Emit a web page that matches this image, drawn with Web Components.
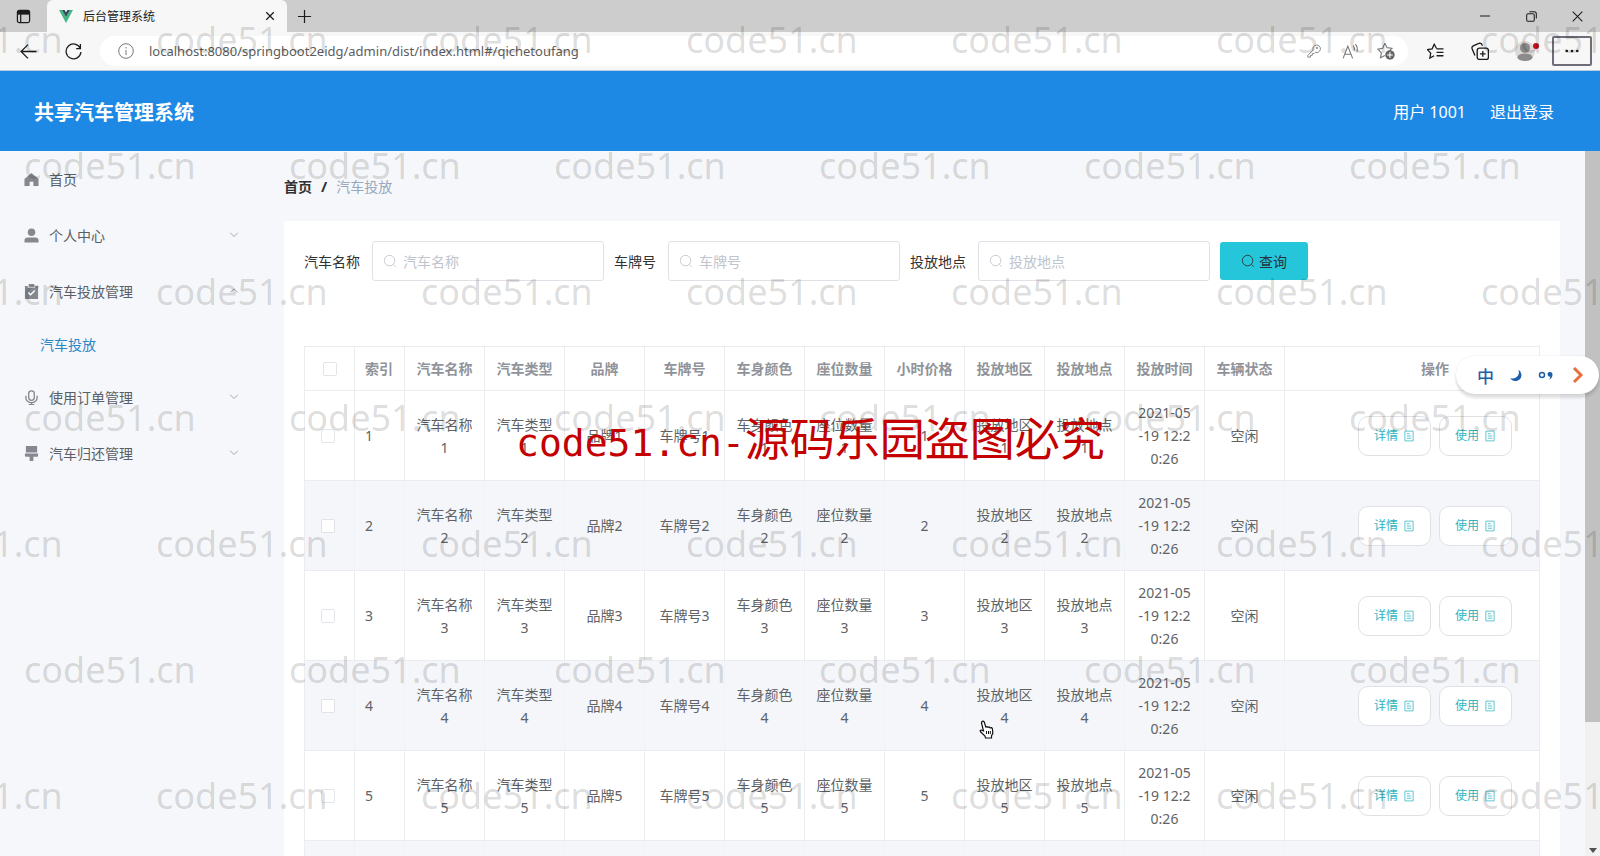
<!DOCTYPE html>
<html lang="zh-CN">
<head>
<meta charset="utf-8">
<title>后台管理系统</title>
<style>
  html, body { margin: 0; height: 100%; }
  body { overflow: hidden; font-family: "Noto Sans", "Noto Sans CJK SC", sans-serif; font-size: 14px; color: #303133; }
</style>
</head>
<body>
<desktop-shell>
  <browser-bar slot="chrome" tab-title="后台管理系统" url="localhost:8080/springboot2eidg/admin/dist/index.html#/qichetoufang"></browser-bar>
  <app-header slot="header" heading="共享汽车管理系统" user="用户 1001"></app-header>
  <side-menu slot="side">
    <menu-item icon="home">首页</menu-item>
    <menu-item icon="user" arrow="down">个人中心</menu-item>
    <menu-item icon="task" arrow="up">汽车投放管理</menu-item>
    <menu-item sub>汽车投放</menu-item>
    <menu-item icon="mic" arrow="down">使用订单管理</menu-item>
    <menu-item icon="brush" arrow="down">汽车归还管理</menu-item>
  </side-menu>
  <bread-crumb slot="main" current="汽车投放">首页</bread-crumb>
  <content-card slot="main">
    <search-form>
      <search-field label="汽车名称"></search-field>
      <search-field label="车牌号"></search-field>
      <search-field label="投放地点"></search-field>
    </search-form>
    <car-table></car-table>
  </content-card>
  <page-scroller slot="scroll"></page-scroller>
  <water-mark slot="over"></water-mark>
  <ime-bar slot="over"></ime-bar>
  <hand-pointer slot="over"></hand-pointer>
</desktop-shell>

<script>
const base = '<style>*,:host{box-sizing:border-box}button{font:inherit;border:0;background:none;padding:0;margin:0;color:inherit}svg{display:block;flex:none}</style>';
const svg = (w, body, extra = '') =>
  `<svg width="${w}" height="${w}" viewBox="0 0 16 16" fill="none" stroke="currentColor" ${extra}>${body}</svg>`;
const define = (name, markup) => customElements.define(name, class extends HTMLElement {
  constructor() {
    super();
    this.attachShadow({ mode: 'open' }).innerHTML = base + (typeof markup === 'function' ? markup(this) : markup);
  }
});
const searchIcon = svg(14, '<circle cx="7.5" cy="7.5" r="6"/><path d="M12 12l2.500 2.500"/>');

define('desktop-shell', `
<style>
  :host { display: flex; flex-direction: column; height: 100vh; position: relative; overflow: hidden; }
  .body { flex: 1; min-height: 0; display: flex; background: #f5f7fa; }
  main { flex: 1; min-width: 0; padding: 0 25px 0 24px; overflow: hidden; }
</style>
<slot name="chrome"></slot>
<slot name="header"></slot>
<div class="body"><slot name="side"></slot><main><slot name="main"></slot></main><slot name="scroll"></slot></div>
<slot name="over"></slot>`);

define('browser-bar', el => `
<style>
  :host { display: block; color: #1b1b1b; background: #f7f7f7; border-bottom: 1px solid #b9cde0; }
  .tabs { display: flex; height: 32px; background: #cdcdcd; }
  button { display: flex; align-items: center; justify-content: center; }
  .panes { width: 47px; }
  .tab { width: 240px; display: flex; align-items: center; gap: 10px; padding: 0 12px; background: #f7f7f7; border-radius: 6px 6px 0 0; font-size: 12px; }
  .tab span { flex: 1; }
  .plus { width: 34px; }
  .win { width: 46px; }
  .fill { flex: 1; }
  .tools { display: flex; align-items: center; gap: 9px; height: 38px; padding: 0 8px 0 10px; }
  .tools button { width: 36px; height: 30px; }
  .pill { flex: 1; display: flex; align-items: center; height: 30px; border-radius: 15px; background: #fff; padding: 0 4px 0 18px; color: #777; }
  input { flex: 1; min-width: 0; border: 0; background: none; outline: 0; padding: 0 0 0 15px; font: 13px "Noto Sans", sans-serif; color: #5c5c5c; }
  .who { position: relative; }
  .who i { position: absolute; right: 4px; top: 7px; width: 6px; height: 6px; border-radius: 50%; background: #c50f1f; }
  .tools .more { width: 40px; border: 2px solid #6e6e78; border-radius: 2px; }
</style>
<div class="tabs">
  <button class="panes" aria-label="标签页">${svg(15, '<rect x="1.500" y="1.500" width="13" height="13" rx="2"/><path d="M1.500 4h13" stroke-width="4"/><path d="M5 5v9"/>', 'stroke-width="1.300"')}</button>
  <div class="tab">
    <svg width="14" height="13" viewBox="0 0 14 13"><path d="M0 0h3l4 7 4-7h3L7 13z" fill="#41b883"/><path d="M3 0h2.600L7 2.400 8.400 0H11L7 7z" fill="#35495e"/></svg>
    <span>${el.getAttribute('tab-title')}</span>
    <button aria-label="关闭标签页">${svg(10, '<path d="M2 2l12 12M14 2L2 14"/>', 'stroke-width="2"')}</button>
  </div>
  <button class="plus" aria-label="新标签页">${svg(15, '<path d="M8 1v14M1 8h14"/>', 'stroke-width="1.300"')}</button>
  <div class="fill"></div>
  <button class="win" aria-label="最小化">${svg(10, '<path d="M0 8h16"/>', 'stroke-width="1.600"')}</button>
  <button class="win" aria-label="还原">${svg(11, '<rect x="1" y="4" width="11" height="11" rx="2"/><path d="M5 1h7a3 3 0 0 1 3 3v7"/>', 'stroke-width="1.500"')}</button>
  <button class="win" aria-label="关闭">${svg(11, '<path d="M1 1l14 14M15 1L1 15"/>', 'stroke-width="1.500"')}</button>
</div>
<div class="tools">
  <button aria-label="返回">${svg(17, '<path d="M15.500 8H1M7.500 1.500L1 8l6.500 6.500"/>', 'stroke-width="1.200"')}</button>
  <button aria-label="刷新">${svg(17, '<path d="M14.500 5.200A7 7 0 1 0 15 8.500M14.500 1v4.200H10.500"/>', 'stroke-width="1.200"')}</button>
  <div class="pill">
    ${svg(16, '<circle cx="8" cy="8" r="7.300"/><path d="M8 7v5M8 4v1.500"/>')}
    <input aria-label="地址" value="${el.getAttribute('url')}">
    <button aria-label="密码">${svg(14, '<path d="M1 13l6-6a4.300 4.300 0 1 1 2.500 2.500L8 11H6v2H4v2H1z"/><circle cx="11.500" cy="4.500" r=".8"/>')}</button>
    <button aria-label="朗读">${svg(17, '<path d="M1 14.500L5.500 3 10 14.500M2.600 10.500h5.800M10.500 2.500q1.800 2 1 4.500M12.500 1q2.800 3 1.500 7"/>')}</button>
    <button aria-label="收藏">${svg(18, '<path d="M7 1l1.900 4 4.400.6-3.200 3M7 12l-3.900 2 .8-4.300L.8 6.400l4.300-.9L7 1"/><circle cx="11.500" cy="11.500" r="4.200" fill="#666" stroke="none"/><path d="M11.500 9v5M9 11.500h5" stroke="#fff"/>')}</button>
  </div>
  <button aria-label="收藏夹">${svg(17, '<path d="M9 5.200L6.800 1.200 4.800 5.500.5 6.200l3 3.300-.8 4.700 4-2.200M9 5.500h6.500M9 8.800h6.500M9 12h6.500"/>', 'stroke-width="1.200"')}</button>
  <button aria-label="集锦">${svg(18, '<rect x="5.500" y="5.500" width="10" height="10" rx="2"/><path d="M10.500 8v5M8 10.500h5M3.500 12L1 6a2 2 0 0 1 1-2.500l5-2.200a2 2 0 0 1 2.700 1l.5 1"/>', 'stroke-width="1.200"')}</button>
  <button class="who" aria-label="用户">${svg(20, '<circle cx="8" cy="8" r="8" fill="#dcd9d7"/><circle cx="8" cy="5.500" r="4" fill="#8b8b8b"/><ellipse cx="8" cy="13" rx="6" ry="3" fill="#8b8b8b"/>', 'stroke-width="0"')}<i></i></button>
  <button class="more" aria-label="更多">${svg(14, '<g fill="currentColor" stroke="none"><circle cx="2" cy="8" r="1.500"/><circle cx="8" cy="8" r="1.500"/><circle cx="14" cy="8" r="1.500"/></g>')}</button>
</div>`);

define('app-header', el => `
<style>
  :host { display: flex; align-items: center; gap: 24px; height: 80px; padding: 0 46px 0 34px; background: #1e88e5; color: #fff; font-size: 16px; flex: none; }
  h1 { flex: 1; margin: 0; font-size: 20px; }
  a { color: inherit; text-decoration: none; }
</style>
<h1>${el.getAttribute('heading')}</h1><span>${el.getAttribute('user')}</span><a href="#logout">退出登录</a>`);

define('side-menu', `
<style>:host { display: block; width: 260px; flex: none; } nav { display: block; }</style>
<nav><slot></slot></nav>`);

const menuIcons = {
  home: '<path d="M8 1l7.500 6.500V15H10v-4.500H6V15H.5V7.500z"/>',
  user: '<circle cx="8" cy="4.500" r="4"/><path d="M.5 15.500v-2Q.5 10 4 10h8q3.500 0 3.500 3.500v2z"/>',
  task: '<path d="M1 2h3v2h8V2h3v14H1z"/><path d="M5 0h6v3H5z"/><path d="M4.500 9l2.500 2.500 4.500-4.500" fill="none" stroke="#fff" stroke-width="1.500"/>',
  mic: '<rect x="5" y="1" width="6" height="10" rx="3" fill="none" stroke="currentColor" stroke-width="1.400"/><path d="M2 6v2.500a6 5 0 0 0 12 0V6M8 13.500v2M5 15.500h6" fill="none" stroke="currentColor" stroke-width="1.400"/>',
  brush: '<path d="M2 0h12v7H2zM1 8h14v2.500q0 1-1 1h-4V16H6v-4.500H2q-1 0-1-1z"/>'
};
define('menu-item', el => {
  const sub = el.hasAttribute('sub'), arrow = el.getAttribute('arrow');
  return `
<style>
  :host { display: block; }
  a { display: flex; align-items: center; gap: 10px; height: 56px; padding: 0 20px 0 24px; color: #5a5e66; text-decoration: none; }
  a.sub { height: 50px; padding-left: 40px; color: #2a86c8; }
  span { flex: 1; }
  svg { color: #85888e; }
</style>
<a href="#menu" class="${sub ? 'sub' : ''}">
  ${sub ? '' : svg(15, menuIcons[el.getAttribute('icon')], 'style="fill:currentColor;stroke:none"')}
  <span><slot></slot></span>
  ${arrow ? svg(12, arrow === 'up' ? '<path d="M3 10l5-5 5 5"/>' : '<path d="M3 5l5 5 5-5"/>') : ''}
</a>`;
});

define('bread-crumb', el => `
<style>
  :host { display: flex; align-items: center; gap: 9px; height: 70px; }
  a { color: #303133; font-weight: 700; text-decoration: none; }
  b { font-size: 15px; }
  span { color: #97a8be; }
</style>
<a href="#home"><slot></slot></a><b>/</b><span>${el.getAttribute('current')}</span>`);

define('content-card', `
<style>:host { display: block; background: #fff; padding: 20px; }</style><slot></slot>`);

define('search-form', `
<style>
  :host { display: block; margin-bottom: 65px; }
  form { display: flex; align-items: center; gap: 10px; }
  button { display: flex; align-items: center; justify-content: center; gap: 4px; width: 88px; height: 38px; border-radius: 3px; background: #26c6da; color: #263238; }
</style>
<form><slot></slot><button type="button">${searchIcon}查询</button></form>`);

define('search-field', el => `
<style>
  :host { display: block; }
  label { display: flex; align-items: center; gap: 12px; white-space: nowrap; }
  .box { display: flex; align-items: center; gap: 6px; width: 232px; height: 40px; padding: 0 10px; border: 1px solid #dfe1e6; border-radius: 3px; color: #c0c4cc; }
  input { flex: 1; min-width: 0; border: 0; outline: 0; padding: 0; font: inherit; color: #606266; background: none; }
  input::placeholder { color: #c0c4cc; }
</style>
<label>${el.getAttribute('label')}<span class="box">${searchIcon}<input type="text" placeholder="${el.getAttribute('label')}"></span></label>`);

define('row-action', `
<style>
  :host { display: inline-block; }
  button { display: flex; align-items: center; justify-content: center; gap: 5px; width: 73px; height: 40px; border: 1px solid #dfe1e6; border-radius: 10px; background: #fff; color: #2fb4c0; font-size: 12px; }
</style>
<button type="button"><slot></slot>${svg(12, '<path d="M2.500 1.500h11v13h-11zM5 5h4M5 8h6M5 11h6"/>')}</button>`);

const heads = ['汽车名称', '汽车类型', '品牌', '车牌号', '车身颜色', '座位数量', '小时价格', '投放地区', '投放地点', '投放时间', '车辆状态'];
const cells = n => heads.map(h =>
  h === '小时价格' ? n : h === '投放时间' ? '2021-05<br>-19 12:2<br>0:26' : h === '车辆状态' ? '空闲' : h + n);
define('car-table', `
<style>
  :host { display: block; overflow: hidden; border: 1px solid #ebecf0; }
  table { table-layout: fixed; width: 1280px; border-spacing: 0; color: #606266; }
  th, td { border: solid #ebecf0; border-width: 0 1px 1px 0; padding: 10px; line-height: 23px; text-align: center; font-size: 14px; }
  th { height: 44px; padding: 0; color: #909399; }
  .check { padding: 0; }
  .index { text-align: left; padding: 0 0 0 10px; }
  th:last-child, td:last-child { border-right: 0; }
  td:last-child { padding: 0; }
  tbody tr { height: 90px; }
  tbody tr:nth-child(even) { background: #f4f6fa; }
  tbody tr:nth-child(even) td { border-right-color: #f0f2f6; }
  input { appearance: none; display: block; width: 14px; height: 14px; margin: 0 auto; border: 1px solid #e2e4e9; border-radius: 2px; background: #fff; }
  td input { margin: 0 0 0 16px; }
  .acts { display: flex; justify-content: center; gap: 8px; }
</style>
<table>
  <colgroup><col style="width:50px"><col style="width:50px">${heads.map(() => '<col style="width:80px">').join('')}<col></colgroup>
  <thead><tr><th class="check"><input type="checkbox" aria-label="全选"></th><th class="index">索引</th>${heads.map(h => `<th>${h}</th>`).join('')}<th>操作</th></tr></thead>
  <tbody>${[1, 2, 3, 4, 5].map(n => `<tr><td class="check"><input type="checkbox" aria-label="选择第${n}行"></td><td class="index">${n}</td>${cells(n).map(c => `<td>${c}</td>`).join('')}<td><div class="acts"><row-action>详情</row-action><row-action>使用</row-action></div></td></tr>`).join('')}
  <tr>${'<td></td>'.repeat(heads.length + 3)}</tr></tbody>
</table>`);

define('page-scroller', `
<style>
  :host { display: flex; flex-direction: column; justify-content: space-between; align-items: center; width: 15px; background: #f1f1f1; flex: none; }
  div { width: 100%; height: 81%; background: #c1c1c1; }
  svg { margin-bottom: 3px; }
</style>
<div></div><svg width="8" height="5"><path d="M0 0h8L4 5z" fill="#505050"/></svg>`);

define('water-mark', `
<style>
  :host { position: absolute; inset: 0; overflow: hidden; pointer-events: none; white-space: nowrap; }
  .row { display: flex; height: 126px; padding-left: 24px; color: rgba(0, 0, 0, .15); font-size: 36px; line-height: 80px; }
  .row.odd { padding-left: 0; margin-left: -109px; }
  .row span { width: 265px; flex: none; }
  p { position: absolute; left: 516px; top: 409px; margin: 0; color: #c40000; font: 45px/56px "Noto Sans CJK SC", sans-serif; }
  code { font: 38px/56px "DejaVu Sans Mono", monospace; }
</style>
${[1, 0, 1, 0, 1, 0, 1].map(o => `<div class="row ${o ? 'odd' : ''}">${'<span>code51.cn</span>'.repeat(o ? 7 : 6)}</div>`).join('')}
<p><code>code51.cn-</code>源码乐园盗图必究</p>`);

define('ime-bar', `
<style>
  :host { position: absolute; right: 1px; top: 356px; display: flex; align-items: center; justify-content: space-between; width: 143px; height: 38px; padding: 0 13px 0 21px; border-radius: 19px; background: #fff; box-shadow: 0 4px 3px rgba(0, 0, 0, .12), 0 0 3px rgba(0, 0, 0, .08); color: #1f5fa8; font-size: 17px; font-weight: 500; }
</style>
<span>中</span>
${svg(12, '<path d="M11 1a8 8 0 0 1-11 10.500A8 8 0 1 0 11 1z" fill="currentColor" stroke="none"/>')}
${svg(16, '<circle cx="4" cy="8" r="2.500" stroke-width="1.500"/><path d="M12 5a2.300 2.300 0 1 0 .5 4.500Q12 12 10.500 13q4-1.500 4-5.500Q14.500 5 12 5z" fill="currentColor" stroke="none"/>')}
${svg(16, '<path d="M4 1l7 7-7 7" stroke="#e8703f" stroke-width="3"/>')}`);

define('hand-pointer', `
<style>:host { position: absolute; left: 978px; top: 720px; }</style>
<svg width="16" height="19" viewBox="0 0 16 19"><path d="M4 1.500q1.500-1 2.300.7L7.800 7l1.200-.4 1 .7 1.200-.4.9.9 1.400-.2q1 .6 1 2l.3 4-1.300 2V18H7.500l-.5-2-4.500-4.200q-1-1.800.7-1.800L5.500 11 3.500 3z" fill="#fff" stroke="#111" stroke-width="1.200"/><path d="M8.500 11v3M10.500 11v3M12.300 11v3" stroke="#111"/></svg>`);
</script>
</body>
</html>
